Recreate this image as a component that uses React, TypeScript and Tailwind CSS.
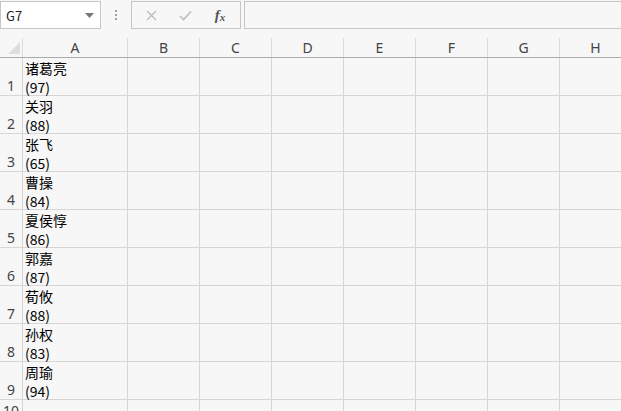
import React from "react";

const cols = [
  { l: "A", w: 105 },
  { l: "B", w: 72 },
  { l: "C", w: 72 },
  { l: "D", w: 72 },
  { l: "E", w: 72 },
  { l: "F", w: 72 },
  { l: "G", w: 72 },
  { l: "H", w: 72 },
];

const data = [
  ["诸葛亮", "(97)"],
  ["关羽", "(88)"],
  ["张飞", "(65)"],
  ["曹操", "(84)"],
  ["夏侯惇", "(86)"],
  ["郭嘉", "(87)"],
  ["荀攸", "(88)"],
  ["孙权", "(83)"],
  ["周瑜", "(94)"],
];

const font = { fontFamily: '"Noto Sans CJK SC", "Noto Sans", sans-serif' };

export default function App() {
  return (
    <div
      className="w-[621px] h-[411px] bg-[#f7f7f7] overflow-hidden text-[#222]"
      style={font}
    >
      {/* formula bar */}
      <div className="flex h-[38px] pt-[1px]">
        <div className="w-[101px] h-[28px] border border-[#c6c6c6] bg-white flex items-center pl-[5px] pr-[6px]">
          <span className="text-[13px] text-[#222] flex-1 leading-none">G7</span>
          <svg width="9" height="5" viewBox="0 0 9 5">
            <path d="M0 0 L9 0 L4.5 5 Z" fill="#777" />
          </svg>
        </div>
        <div className="w-[30px] h-[28px] flex flex-col items-center justify-center gap-[2px]">
          <div className="w-[2px] h-[2px] bg-[#a0a0a0]" />
          <div className="w-[2px] h-[2px] bg-[#a0a0a0]" />
          <div className="w-[2px] h-[2px] bg-[#a0a0a0]" />
        </div>
        <div className="w-[110px] h-[28px] border border-[#c6c6c6] bg-[#f7f7f7] flex items-center">
          <div className="w-[36px] flex justify-center pl-[2px]">
            <svg width="11" height="11" viewBox="0 0 11 11">
              <path d="M1 1 L10 10 M10 1 L1 10" stroke="#bdbdbd" strokeWidth="1.3" />
            </svg>
          </div>
          <div className="w-[34px] flex justify-center">
            <svg width="13" height="11" viewBox="0 0 13 11">
              <path d="M1 6 L4.5 9.5 L12 1.5" stroke="#bdbdbd" strokeWidth="1.6" fill="none" />
            </svg>
          </div>
          <div
            className="flex-1 flex justify-center items-start text-[15px] italic font-bold text-[#555] leading-none pr-[2px]"
            style={{ fontFamily: '"Liberation Serif", serif' }}
          >
            <span>f</span>
            <span className="text-[11px] mt-[4px]">x</span>
          </div>
        </div>
        <div className="flex-1 ml-[3px] h-[28px] border border-r-0 border-[#c6c6c6] bg-[#f7f7f7]" />
      </div>

      {/* column headers */}
      <div className="flex h-[20px] border-b border-[#ababab]">
        <div className="w-[23px] shrink-0 border-r border-[#dcdcdc] relative">
          <svg className="absolute left-[8px] top-[4px]" width="12" height="12" viewBox="0 0 12 12">
            <path d="M12 0 L12 12 L0 12 Z" fill="#dedede" />
          </svg>
        </div>
        {cols.map((c) => (
          <div
            key={c.l}
            className="shrink-0 border-r border-[#dcdcdc] flex items-end justify-center text-[14px] leading-[18px] text-[#444]"
            style={{ width: c.w, fontFamily: '"Noto Sans", sans-serif' }}
          >
            {c.l}
          </div>
        ))}
      </div>

      {/* rows */}
      {data.map((r, i) => (
        <div key={i} className="flex h-[38px] border-b border-[#d6d6d6]">
          <div
            className="w-[23px] shrink-0 border-r border-[#d6d6d6] flex items-end justify-center text-[14px] leading-[19px] text-[#444]"
            style={{ fontFamily: '"Noto Sans", sans-serif' }}
          >
            {i + 1}
          </div>
          {cols.map((c, j) => (
            <div
              key={c.l}
              className="shrink-0 border-r border-[#d6d6d6] text-[14px] leading-[19px] text-black pl-[2px] pt-[1px]"
              style={{ width: c.w }}
            >
              {j === 0 && (
                <>
                  <div>{r[0]}</div>
                  <div>{r[1]}</div>
                </>
              )}
            </div>
          ))}
        </div>
      ))}
      <div className="flex h-[38px]">
        <div
          className="w-[23px] shrink-0 border-r border-[#d6d6d6] flex justify-center text-[14px] leading-[19px] text-[#444] pt-[1px]"
          style={{ fontFamily: '"Noto Sans", sans-serif' }}
        >
          10
        </div>
        {cols.map((c) => (
          <div key={c.l} className="shrink-0 border-r border-[#d6d6d6]" style={{ width: c.w }} />
        ))}
      </div>
    </div>
  );
}
